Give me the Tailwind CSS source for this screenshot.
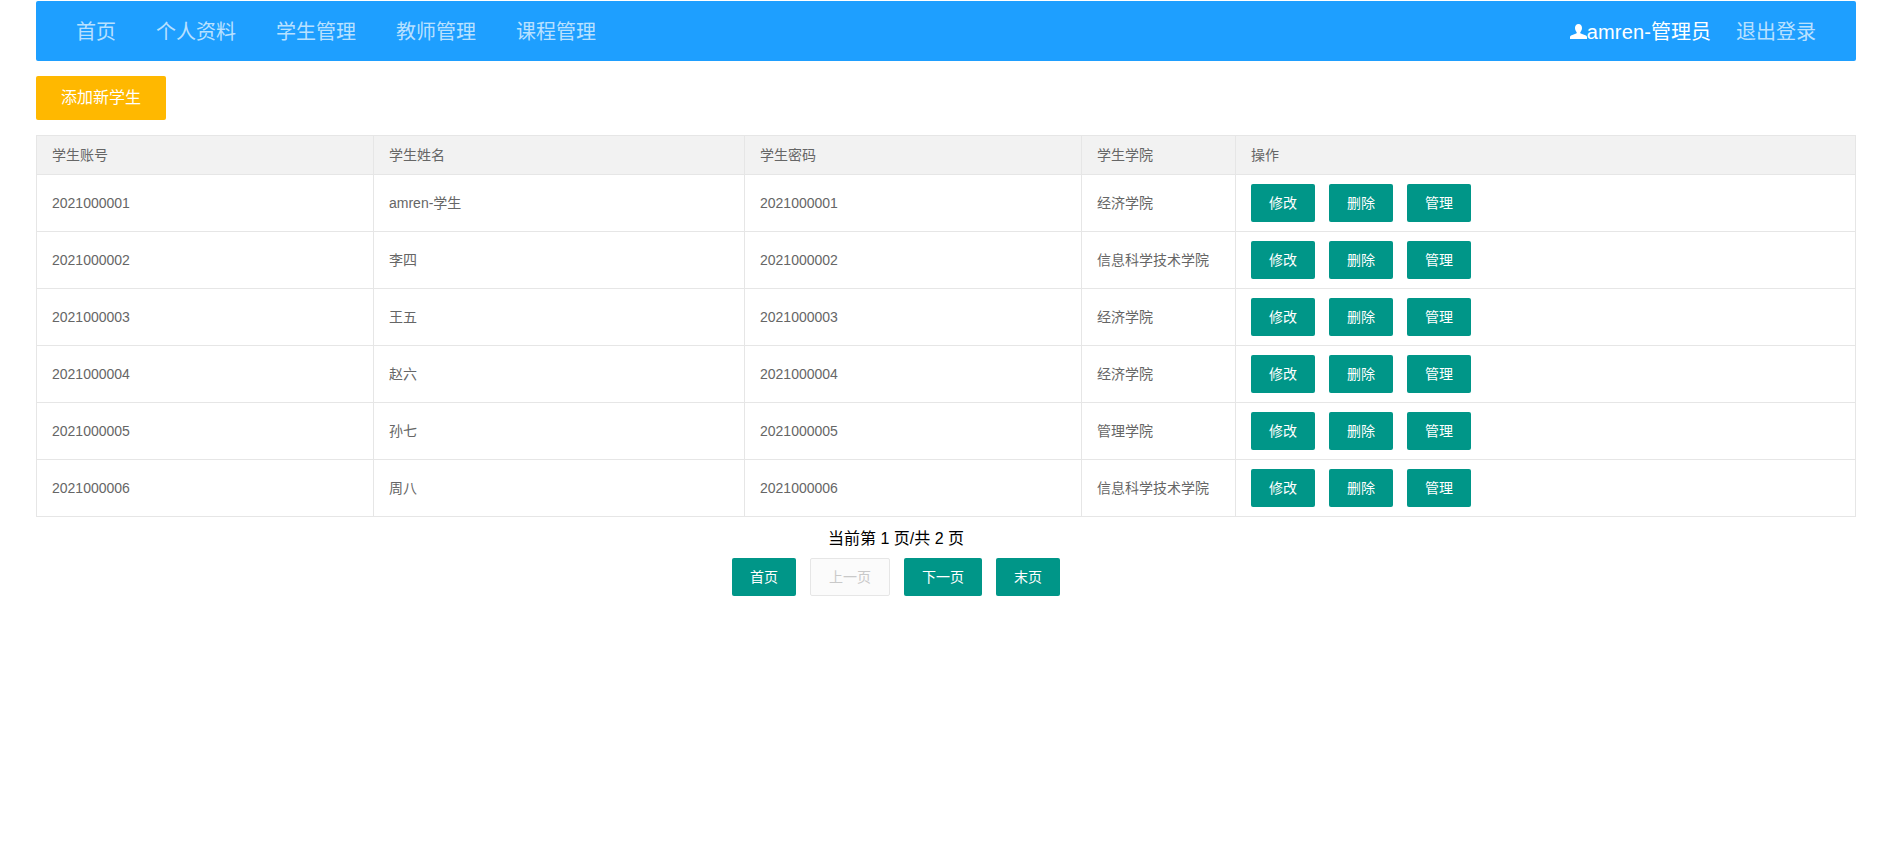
<!DOCTYPE html>
<html lang="zh-CN">
<head>
<meta charset="utf-8">
<title>学生管理</title>
<script src="https://cdn.jsdelivr.net/npm/@tailwindcss/browser@4"></script>
</head>
<body class="bg-white font-['Liberation_Sans','Noto_Sans_CJK_SC',sans-serif] text-[14px] text-[#666]">
<div class="w-[1820px] ml-[36px] pt-[1px]">
  <nav class="h-[60px] bg-[#1E9FFF] rounded-[2px] flex items-center justify-between px-[40px] pt-[2px] text-[20px] text-white/70">
    <ul class="flex gap-[40px]">
      <li><a href="#">首页</a></li>
      <li><a href="#">个人资料</a></li>
      <li><a href="#">学生管理</a></li>
      <li><a href="#">教师管理</a></li>
      <li><a href="#">课程管理</a></li>
    </ul>
    <ul class="flex items-center gap-[25px]">
      <li class="flex items-center text-white">
        <svg class="w-[17px] h-[15px] fill-white -translate-y-px" viewBox="0 0 17 15"><path d="M8.5 0C6.200 0 5 1.800 5 4c0 1.700.8 3.200 1.600 4.200.3.500.2 1-.4 1.300L1 11.500C.3 11.900 0 12.400 0 13v2h17v-2c0-.6-.3-1.100-1-1.500l-5.200-2c-.6-.3-.7-.8-.4-1.300C11.200 7.200 12 5.700 12 4c0-2.200-1.200-4-3.500-4z"/></svg>
        <span><span class="tracking-[0.15px]">amren-</span>管理员</span>
      </li>
      <li><a href="#">退出登录</a></li>
    </ul>
  </nav>

  <button class="block mt-[15px] h-[44px] px-[25px] bg-[#FFB800] text-white text-[16px] rounded-[2px]">添加新学生</button>

  <table class="mt-[15px] w-[1820px] table-fixed border-collapse border border-[#e6e6e6]">
    <colgroup>
      <col class="w-[337px]"><col class="w-[371px]"><col class="w-[337px]"><col class="w-[154px]"><col>
    </colgroup>
    <thead>
      <tr class="h-[39px] bg-[#f2f2f2] text-left">
        <th class="font-normal border border-[#e6e6e6] px-[15px]">学生账号</th>
        <th class="font-normal border border-[#e6e6e6] px-[15px]">学生姓名</th>
        <th class="font-normal border border-[#e6e6e6] px-[15px]">学生密码</th>
        <th class="font-normal border border-[#e6e6e6] px-[15px]">学生学院</th>
        <th class="font-normal border border-[#e6e6e6] px-[15px]">操作</th>
      </tr>
    </thead>
    <tbody>
      <tr class="h-[57px]">
        <td class="border border-[#e6e6e6] px-[15px]">2021000001</td>
        <td class="border border-[#e6e6e6] px-[15px]">amren-学生</td>
        <td class="border border-[#e6e6e6] px-[15px]">2021000001</td>
        <td class="border border-[#e6e6e6] px-[15px]">经济学院</td>
        <td class="border border-[#e6e6e6] px-[15px]"><div class="flex gap-[14px]"><button class="h-[38px] w-[64px] bg-[#009688] text-white rounded-[2px]">修改</button><button class="h-[38px] w-[64px] bg-[#009688] text-white rounded-[2px]">删除</button><button class="h-[38px] w-[64px] bg-[#009688] text-white rounded-[2px]">管理</button></div></td>
      </tr>
      <tr class="h-[57px]">
        <td class="border border-[#e6e6e6] px-[15px]">2021000002</td>
        <td class="border border-[#e6e6e6] px-[15px]">李四</td>
        <td class="border border-[#e6e6e6] px-[15px]">2021000002</td>
        <td class="border border-[#e6e6e6] px-[15px]">信息科学技术学院</td>
        <td class="border border-[#e6e6e6] px-[15px]"><div class="flex gap-[14px]"><button class="h-[38px] w-[64px] bg-[#009688] text-white rounded-[2px]">修改</button><button class="h-[38px] w-[64px] bg-[#009688] text-white rounded-[2px]">删除</button><button class="h-[38px] w-[64px] bg-[#009688] text-white rounded-[2px]">管理</button></div></td>
      </tr>
      <tr class="h-[57px]">
        <td class="border border-[#e6e6e6] px-[15px]">2021000003</td>
        <td class="border border-[#e6e6e6] px-[15px]">王五</td>
        <td class="border border-[#e6e6e6] px-[15px]">2021000003</td>
        <td class="border border-[#e6e6e6] px-[15px]">经济学院</td>
        <td class="border border-[#e6e6e6] px-[15px]"><div class="flex gap-[14px]"><button class="h-[38px] w-[64px] bg-[#009688] text-white rounded-[2px]">修改</button><button class="h-[38px] w-[64px] bg-[#009688] text-white rounded-[2px]">删除</button><button class="h-[38px] w-[64px] bg-[#009688] text-white rounded-[2px]">管理</button></div></td>
      </tr>
      <tr class="h-[57px]">
        <td class="border border-[#e6e6e6] px-[15px]">2021000004</td>
        <td class="border border-[#e6e6e6] px-[15px]">赵六</td>
        <td class="border border-[#e6e6e6] px-[15px]">2021000004</td>
        <td class="border border-[#e6e6e6] px-[15px]">经济学院</td>
        <td class="border border-[#e6e6e6] px-[15px]"><div class="flex gap-[14px]"><button class="h-[38px] w-[64px] bg-[#009688] text-white rounded-[2px]">修改</button><button class="h-[38px] w-[64px] bg-[#009688] text-white rounded-[2px]">删除</button><button class="h-[38px] w-[64px] bg-[#009688] text-white rounded-[2px]">管理</button></div></td>
      </tr>
      <tr class="h-[57px]">
        <td class="border border-[#e6e6e6] px-[15px]">2021000005</td>
        <td class="border border-[#e6e6e6] px-[15px]">孙七</td>
        <td class="border border-[#e6e6e6] px-[15px]">2021000005</td>
        <td class="border border-[#e6e6e6] px-[15px]">管理学院</td>
        <td class="border border-[#e6e6e6] px-[15px]"><div class="flex gap-[14px]"><button class="h-[38px] w-[64px] bg-[#009688] text-white rounded-[2px]">修改</button><button class="h-[38px] w-[64px] bg-[#009688] text-white rounded-[2px]">删除</button><button class="h-[38px] w-[64px] bg-[#009688] text-white rounded-[2px]">管理</button></div></td>
      </tr>
      <tr class="h-[57px]">
        <td class="border border-[#e6e6e6] px-[15px]">2021000006</td>
        <td class="border border-[#e6e6e6] px-[15px]">周八</td>
        <td class="border border-[#e6e6e6] px-[15px]">2021000006</td>
        <td class="border border-[#e6e6e6] px-[15px]">信息科学技术学院</td>
        <td class="border border-[#e6e6e6] px-[15px]"><div class="flex gap-[14px]"><button class="h-[38px] w-[64px] bg-[#009688] text-white rounded-[2px]">修改</button><button class="h-[38px] w-[64px] bg-[#009688] text-white rounded-[2px]">删除</button><button class="h-[38px] w-[64px] bg-[#009688] text-white rounded-[2px]">管理</button></div></td>
      </tr>
    </tbody>
  </table>

  <div class="ml-[696px] w-[328px] mt-[11px]">
    <p class="h-[22px] leading-[22px] text-[16px] text-center text-black">当前第 1 页/共 2 页</p>
    <div class="mt-[8px] flex gap-[14px]">
      <button class="h-[38px] w-[64px] bg-[#009688] text-white rounded-[2px]">首页</button>
      <button class="h-[38px] w-[80px] bg-[#FBFBFB] text-[#C9C9C9] border border-[#e6e6e6] rounded-[2px]">上一页</button>
      <button class="h-[38px] w-[78px] bg-[#009688] text-white rounded-[2px]">下一页</button>
      <button class="h-[38px] w-[64px] bg-[#009688] text-white rounded-[2px]">末页</button>
    </div>
  </div>
</div>
</body>
</html>
